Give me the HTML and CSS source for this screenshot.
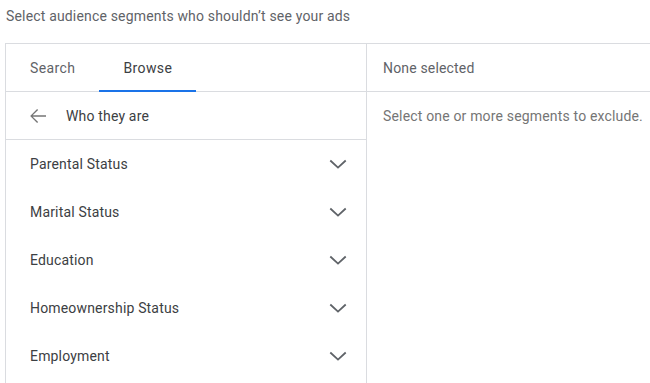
FILE: index.html
```html
<!DOCTYPE html>
<html>
<head>
<meta charset="utf-8">
<link rel="stylesheet" href="styles.css">
</head>
<body>
<div class="page">
  <p class="intro">Select audience segments who shouldn’t see your ads</p>
  <div class="picker">
    <div class="left">
      <div class="tabs">
        <div class="tab">Search</div>
        <div class="tab active">Browse</div>
      </div>
      <div class="crumb">
        <svg class="back" width="24" height="24" viewBox="0 0 24 24"><path d="M20 11.3H6.7l5.4-5.4-1-1L4.2 12l6.9 7.1 1-1-5.4-5.4H20z" fill="#757575"/></svg>
        <span>Who they are</span>
      </div>
      <div class="item"><span>Parental Status</span><svg class="chev" width="24" height="24" viewBox="0 0 24 24"><path d="M4.3 8.5L12 15.6l7.7-7.1" fill="none" stroke="#5f6368" stroke-width="1.8"/></svg></div>
      <div class="item"><span>Marital Status</span><svg class="chev" width="24" height="24" viewBox="0 0 24 24"><path d="M4.3 8.5L12 15.6l7.7-7.1" fill="none" stroke="#5f6368" stroke-width="1.8"/></svg></div>
      <div class="item"><span>Education</span><svg class="chev" width="24" height="24" viewBox="0 0 24 24"><path d="M4.3 8.5L12 15.6l7.7-7.1" fill="none" stroke="#5f6368" stroke-width="1.8"/></svg></div>
      <div class="item"><span>Homeownership Status</span><svg class="chev" width="24" height="24" viewBox="0 0 24 24"><path d="M4.3 8.5L12 15.6l7.7-7.1" fill="none" stroke="#5f6368" stroke-width="1.8"/></svg></div>
      <div class="item"><span>Employment</span><svg class="chev" width="24" height="24" viewBox="0 0 24 24"><path d="M4.3 8.5L12 15.6l7.7-7.1" fill="none" stroke="#5f6368" stroke-width="1.8"/></svg></div>
    </div>
    <div class="right">
      <div class="head">None selected</div>
      <div class="empty">Select one or more segments to exclude.</div>
    </div>
  </div>
</div>
</body>
</html>
```

FILE: styles.css
```css
html, body {
  margin: 0;
  padding: 0;
  background: #ffffff;
  overflow: hidden;
}
body {
  font-family: Roboto, "Liberation Sans", Arial, sans-serif;
  font-size: 14px;
  letter-spacing: 0.17px;
  width: 650px;
  height: 383px;
}
.page {
  padding-top: 6px;
}
.intro {
  margin: 0 0 17px 6px;
  line-height: 20px;
  color: #5f6368;
}
.picker {
  margin-left: 5px;
  width: 680px;
  height: 400px;
  border: 1px solid #dadce0;
  display: grid;
  grid-template-columns: 361px 1fr;
}
.left {
  border-right: 1px solid #dadce0;
  display: flex;
  flex-direction: column;
}
.tabs {
  display: flex;
  height: 47px;
  border-bottom: 1px solid #dadce0;
}
.tab {
  height: 48px;
  padding: 2px 24px 0;
  display: flex;
  align-items: center;
  letter-spacing: 0.4px;
  color: #5f6368;
  border-bottom: 2px solid transparent;
  box-sizing: border-box;
  margin-bottom: -1px;
}
.tab.active {
  color: #3c4043;
  border-bottom-color: #1a73e8;
}
.crumb {
  height: 47px;
  border-bottom: 1px solid #dadce0;
  display: flex;
  align-items: center;
  padding-left: 20px;
  gap: 16px;
  color: #3c4043;
}
.item {
  height: 48px;
  display: flex;
  align-items: center;
  justify-content: space-between;
  padding: 0 16px 0 24px;
  color: #3c4043;
}
.chev {
  display: block;
}
.right {
  display: flex;
  flex-direction: column;
}
.head {
  height: 47px;
  border-bottom: 1px solid #dadce0;
  display: flex;
  align-items: center;
  padding-left: 16px;
  color: #5f6368;
}
.empty {
  height: 47px;
  display: flex;
  align-items: center;
  padding-left: 16px;
  color: #757575;
}
```
